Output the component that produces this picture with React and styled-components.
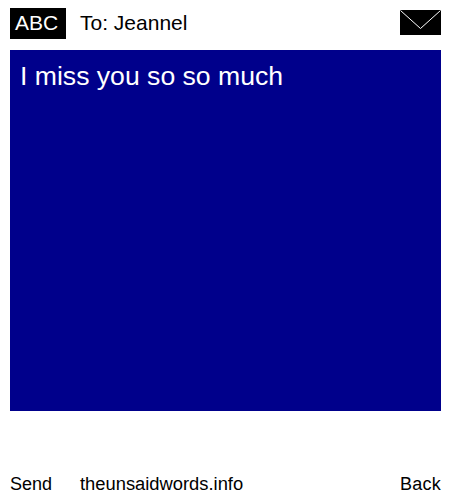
import React from "react";
import styled, { createGlobalStyle } from "styled-components";

const Global = createGlobalStyle`
  html, body { margin: 0; padding: 0; background: #fff; }
  body { font-family: "Liberation Sans", Arial, sans-serif; color: #000; }
`;

const Page = styled.div`
  width: 450px;
  height: 500px;
  display: flex;
  flex-direction: column;
  box-sizing: border-box;
  padding: 8px 9px 0 10px;
`;

const Header = styled.header`
  display: flex;
  align-items: flex-start;
  height: 31px;
`;

const ModeBadge = styled.div`
  width: 56px;
  height: 31px;
  box-sizing: border-box;
  padding-right: 3px;
  background: #000;
  color: #fff;
  font-size: 21px;
  line-height: 30px;
  text-align: center;
`;

const Recipient = styled.div`
  margin-left: 14px;
  font-size: 21px;
  line-height: 30px;
  flex: 1;
`;

const Envelope = styled.svg`
  display: block;
  width: 41px;
  height: 25px;
  margin-top: 2px;
`;

const MessagePanel = styled.main`
  margin-top: 11px;
  height: 361px;
  background: #00008b;
  color: #fff;
  font-size: 26.6px;
  line-height: 30px;
  padding: 11px 10px;
  box-sizing: border-box;
`;

const Footer = styled.footer`
  display: flex;
  align-items: center;
  margin-top: 62px;
  font-size: 18px;
  line-height: 22px;
`;

const SoftKey = styled.span`
  width: ${(p) => p.$width || "auto"};
  letter-spacing: ${(p) => p.$tracking || "0"};
`;

const Site = styled.span`
  flex: 1;
  font-size: 18.35px;
`;

export default function App() {
  return (
    <Page>
      <Global />
      <Header>
        <ModeBadge>ABC</ModeBadge>
        <Recipient>To: Jeannel</Recipient>
        <Envelope viewBox="0 0 41 25">
          <rect width="41" height="25" fill="#000" />
          <path d="M0.5 0.5 L20.5 18.5 L40.5 0.5" fill="none" stroke="#fff" strokeWidth="1" />
        </Envelope>
      </Header>
      <MessagePanel>I miss you so so much</MessagePanel>
      <Footer>
        <SoftKey $width="70px">Send</SoftKey>
        <Site>theunsaidwords.info</Site>
        <SoftKey $tracking="0.25px">Back</SoftKey>
      </Footer>
    </Page>
  );
}
